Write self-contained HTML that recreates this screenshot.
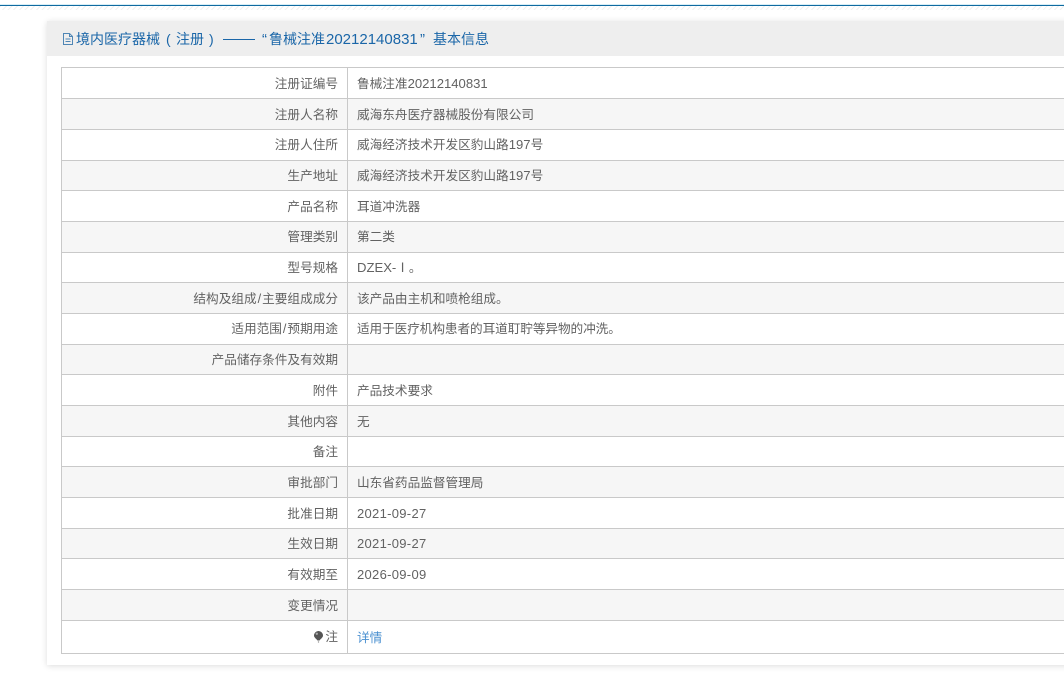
<!DOCTYPE html>
<html lang="zh-CN">
<head>
<meta charset="utf-8">
<title>基本信息</title>
<style>
html,body{margin:0;padding:0;width:1064px;height:693px;overflow:hidden;background:#fff;}
body{position:relative;font-family:"Liberation Sans","Noto Sans CJK SC",sans-serif;font-size:12.65px;color:#626262;}
.line0{position:absolute;left:0;top:4px;width:1064px;height:1px;background:#d8eef6;}
.line{position:absolute;left:0;top:5px;width:1064px;height:1px;background:#0f6aa0;}
.hatch{position:absolute;left:0;top:6px;width:1064px;height:4px;background:repeating-linear-gradient(135deg,#f0f0f0 0 1px,#fff 1px 4px);}
.panel{position:absolute;left:47px;top:21px;width:1100px;height:644px;background:#fff;box-shadow:0 1px 6px rgba(0,0,0,.14);}
.head{position:absolute;left:47px;top:21px;width:1100px;height:35px;background:#eeeeee;}
.t{position:absolute;top:22px;height:35px;line-height:35px;font-size:14px;color:#1a66a8;white-space:nowrap;}
.ic{position:absolute;left:62px;top:32px;}
.r{position:absolute;left:61px;width:1100px;border-top:1px solid #c9c9c9;box-sizing:border-box;}
.g{background:#f6f6f6;}
.l{position:absolute;left:0;top:0;width:277px;text-align:right;white-space:nowrap;line-height:30px;}
.v{position:absolute;left:296px;top:0;white-space:nowrap;line-height:30px;}
.p .l,.p .v{top:1px;}
.n{font-size:13.1px;}
.s{padding:0 1px;}
.dt{font-size:13px;letter-spacing:.3px;}
.lv{position:absolute;left:61px;top:67px;width:1px;height:587px;background:#c9c9c9;}
.mv{position:absolute;left:347px;top:67px;width:1px;height:587px;background:#c9c9c9;}
.bt{position:absolute;left:61px;top:653px;width:1100px;height:1px;background:#c9c9c9;}
a{color:#4a90d0;text-decoration:none;}
</style>
</head>
<body>
<div class="line0"></div>
<div class="line"></div>
<div class="hatch"></div>
<div class="panel"></div>
<div class="head"></div>
<svg class="ic" width="12" height="14" viewBox="0 0 12 14" fill="none" stroke="#4f86b5" stroke-width="1"><path d="M1.5 1.5H7.5L10.5 4.5V12.5H1.5Z M7.5 1.5V4.5H10.5 M3.5 7H8.5 M3.5 9.5H8.5"/></svg>
<span class="t" style="left:76px">境内医疗器械</span>
<span class="t" style="left:166px;font-family:'Liberation Sans',sans-serif">(</span>
<span class="t" style="left:176px">注册</span>
<span class="t" style="left:209px;font-family:'Liberation Sans',sans-serif">)</span>
<div style="position:absolute;left:223px;top:39px;width:32px;height:1px;background:#1a66a8"></div>
<span class="t" style="left:262px;font-family:'Liberation Sans',sans-serif;font-size:15px">“</span>
<span class="t" style="left:269px">鲁械注准</span>
<span class="t" style="left:326px;font-size:15px">20212140831</span>
<span class="t" style="left:420px;font-family:'Liberation Sans',sans-serif;font-size:15px">”</span>
<span class="t" style="left:433px">基本信息</span>

<div class="r p" style="top:67px;height:31px"><div class="l">注册证编号</div><div class="v">鲁械注准<span class="n">20212140831</span></div></div>
<div class="r g p" style="top:98px;height:31px"><div class="l">注册人名称</div><div class="v">威海东舟医疗器械股份有限公司</div></div>
<div class="r" style="top:129px;height:31px"><div class="l">注册人住所</div><div class="v">威海经济技术开发区豹山路<span class="n">197</span>号</div></div>
<div class="r g" style="top:160px;height:30px"><div class="l">生产地址</div><div class="v">威海经济技术开发区豹山路<span class="n">197</span>号</div></div>
<div class="r p" style="top:190px;height:31px"><div class="l">产品名称</div><div class="v">耳道冲洗器</div></div>
<div class="r g" style="top:221px;height:31px"><div class="l">管理类别</div><div class="v">第二类</div></div>
<div class="r" style="top:252px;height:30px"><div class="l">型号规格</div><div class="v"><span class="n">DZEX-</span>Ⅰ。</div></div>
<div class="r g p" style="top:282px;height:31px"><div class="l">结构及组成<span class="s">/</span>主要组成成分</div><div class="v">该产品由主机和喷枪组成。</div></div>
<div class="r" style="top:313px;height:31px"><div class="l">适用范围<span class="s">/</span>预期用途</div><div class="v" style="letter-spacing:-.08px">适用于医疗机构患者的耳道耵聍等异物的冲洗。</div></div>
<div class="r g" style="top:344px;height:30px"><div class="l">产品储存条件及有效期</div></div>
<div class="r p" style="top:374px;height:31px"><div class="l">附件</div><div class="v">产品技术要求</div></div>
<div class="r g p" style="top:405px;height:31px"><div class="l">其他内容</div><div class="v">无</div></div>
<div class="r" style="top:436px;height:30px"><div class="l">备注</div></div>
<div class="r g p" style="top:466px;height:31px"><div class="l">审批部门</div><div class="v">山东省药品监督管理局</div></div>
<div class="r p" style="top:497px;height:31px"><div class="l">批准日期</div><div class="v dt">2021-09-27</div></div>
<div class="r g" style="top:528px;height:30px"><div class="l">生效日期</div><div class="v dt">2021-09-27</div></div>
<div class="r p" style="top:558px;height:31px"><div class="l">有效期至</div><div class="v dt">2026-09-09</div></div>
<div class="r g p" style="top:589px;height:31px"><div class="l">变更情况</div></div>
<div class="r p" style="top:620px;height:33px"><div class="l">注</div><div class="v" style="top:2px"><a>详情</a></div></div>
<div class="lv"></div>
<div class="mv"></div>
<div class="bt"></div>
<svg style="position:absolute;left:313px;top:630px" width="12" height="13" viewBox="0 0 12 13"><path d="M5.5 1A4.5 4.5 0 0 1 10 5.5C10 7.5 8 8.5 6.5 10.5H4.5C3 8.5 1 7.5 1 5.5A4.5 4.5 0 0 1 5.5 1Z" fill="#555"/><circle cx="3.8" cy="3.8" r="1.2" fill="#aaa"/><circle cx="5.5" cy="12" r=".7" fill="#999"/></svg>
</body>
</html>
